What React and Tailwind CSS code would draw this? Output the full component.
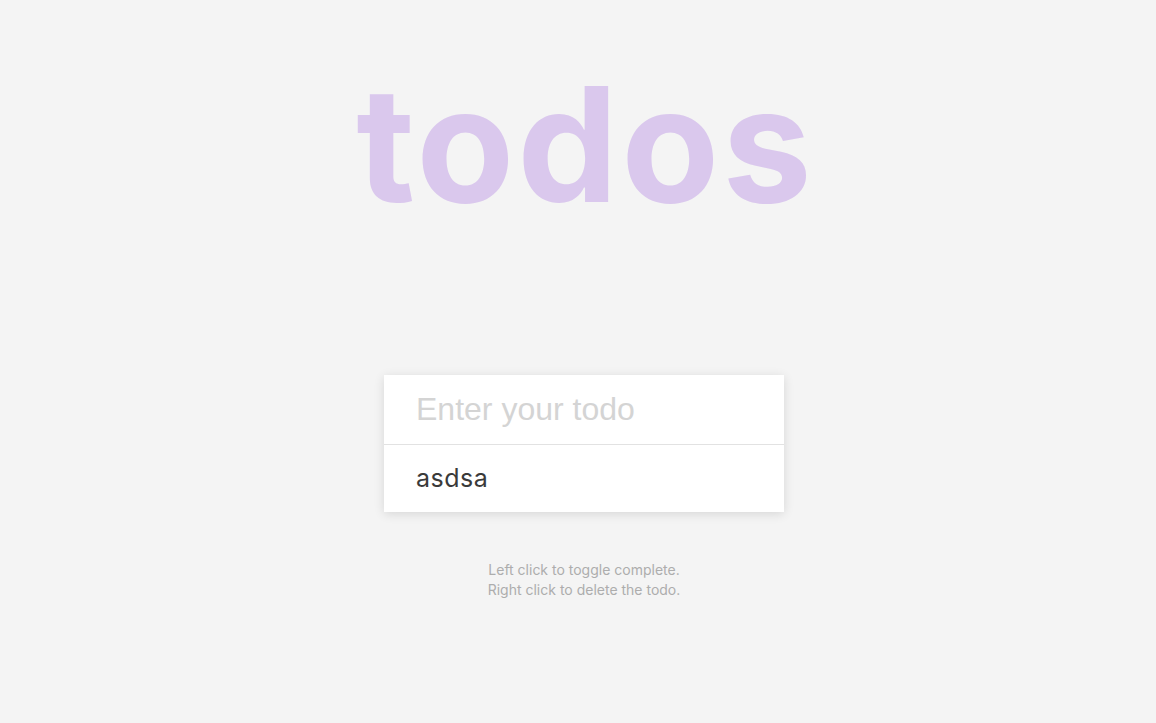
export default function App() {
  return (
    <div className="min-h-[723px] w-full bg-[#f4f4f4] flex flex-col items-center pl-3" style={{ fontFamily: 'Inter, "Liberation Sans", sans-serif' }}>
      <h1 className="mt-[64px] pl-[3px] text-[160px] leading-none font-bold text-[#dac8ed] tracking-[3px]" style={{ fontFamily: 'Inter, sans-serif' }}>
        todos
      </h1>
      <div className="mt-[151px] w-[400px] bg-white shadow-[0_2px_10px_rgba(0,0,0,0.12)]">
        <input
          type="text"
          placeholder="Enter your todo"
          className="block w-full h-[70px] px-8 text-[32px] text-[#333] placeholder:text-[#d4d4d4] outline-none border-b border-[#e2e2e2] bg-white"
          style={{ fontFamily: '"Liberation Sans", Arial, sans-serif' }}
        />
        <div className="h-[67px] px-8 flex items-center text-[25px] tracking-[0.5px] text-[#3a3a3a]">
          asdsa
        </div>
      </div>
      <div className="mt-[48px] text-[14px] leading-5 text-[#adadad] text-center">
        <p>Left click to toggle complete.</p>
        <p>Right click to delete the todo.</p>
      </div>
    </div>
  );
}
